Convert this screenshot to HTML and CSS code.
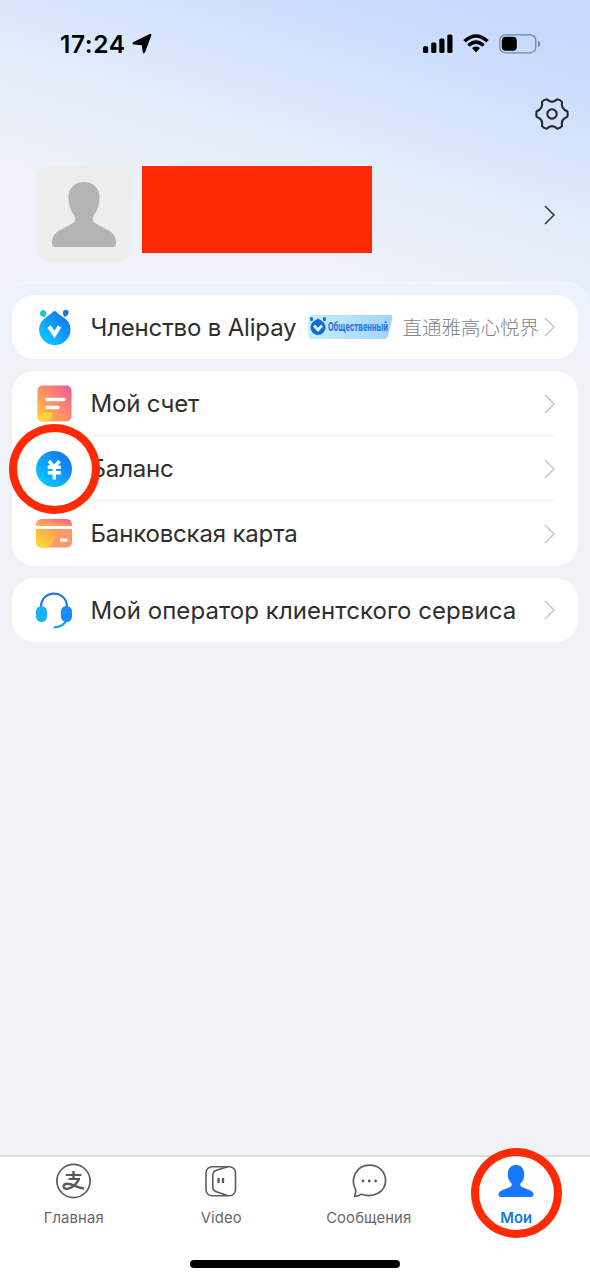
FILE: index.html
```html
<!DOCTYPE html>
<html lang="ru">
<head>
<meta charset="utf-8">
<title>Alipay</title>
<link rel="stylesheet" href="styles.css">
</head>
<body>
<div class="screen">
  <header class="status">
    <div class="clock"><span class="time">17:24</span>
      <svg class="loc" width="20" height="20" viewBox="0 0 20 20"><path d="M18.600 1.400 12.500 18Q11.800 19.500 11.400 18L10.300 10.600 2 9.900Q.300 9.500 1.800 8.600L17.600 .800Q19.200 .200 18.600 1.400Z" stroke="#000" stroke-width="1.300" stroke-linejoin="round"/></svg>
    </div>
    <div class="signals">
      <svg width="30" height="20" viewBox="0 0 30 20"><rect x="0" y="12.3" width="5.2" height="6.7" rx="1.5"/><rect x="8.2" y="8.4" width="5.2" height="10.6" rx="1.5"/><rect x="16.3" y="4.6" width="5.2" height="14.4" rx="1.5"/><rect x="24.3" y=".5" width="5.2" height="18.5" rx="1.5"/></svg>
      <svg width="26" height="20" viewBox="0 0 26 20" fill="none" stroke="#000" stroke-width="3.5"><path d="M1.5 7.2Q13-3.2 24.5 7.2"/><path d="M5.4 11.5Q13 4.8 20.6 11.5"/><path d="M9 14Q13 11.2 17 14L13 18.5Z" fill="#000" stroke="none"/></svg>
      <svg width="42" height="20" viewBox="0 0 42 20"><rect x=".8" y=".8" width="36" height="18" rx="5.6" fill="none" stroke="#77859a" stroke-width="1.3"/><rect x="2.8" y="2.8" width="15" height="14" rx="3.8"/><path d="M39 6.7q2.4 1 2.400 3.200T39 13Z" fill="#77859a"/></svg>
    </div>
  </header>
  <div class="tools">
    <svg width="36" height="36" viewBox="-18 -18 36 36" fill="none" stroke="#262a31" stroke-width="2.1" stroke-linejoin="round"><path d="M15.4 2.7Q8.7 5 10 12Q8.8 14 5.3 14.7Q0 9.7-5.3 14.7Q-8.8 14-10 12Q-8.7 5-15.4 2.7Q-16-0-15.4-2.7Q-8.7-5-10-12Q-8.8-14-5.3-14.7Q0-9.7 5.3-14.7Q8.8-14 10-12Q8.7-5 15.4-2.7Q16 0 15.4 2.7Z"/><circle r="4.7"/></svg>
  </div>
  <section class="profile">
    <div class="avatar">
      <svg width="64" height="65" viewBox="0 0 64 65" fill="#b4b4b4"><path d="M32 0C22 0 16.5 7 16.5 15C16.5 22 18 28 22.5 33.5Q25 39 19.5 42L7 48.5Q0 53 0 60V62Q0 65 3 65H61Q64 65 64 62V60Q64 53 57 48.500L44.500 42Q39 39 41.500 33.500C46 28 47.500 22 47.500 15C47.500 7 42 0 32 0Z"/></svg>
    </div>
    <div class="redacted"></div>
    <svg class="arrow dark" width="12" height="20" viewBox="0 0 12 20"><path d="m1 1 9 9-9 9"/></svg>
  </section>
  <main class="sheet">
    <div class="card">
      <div class="row">
        <svg class="icon" width="36" height="38" viewBox="0 0 36 38">
          <defs><linearGradient id="blue" x1="1" y1="0" x2="0" y2="1"><stop offset=".2" stop-color="#127df8"/><stop offset="1" stop-color="#08d6ff"/></linearGradient></defs>
          <path d="M8.800 9Q3.500 9 4 4.500Q5.500 .800 8.800 2.500Q12 5 8.800 9Z" fill="#1dc3d8"/><path d="M28.500 9Q33.500 7 32.500 3Q29.500 .300 27.200 3Q26 6 28.500 9Z" fill="#147bdc"/>
          <path d="M18.500 3Q20 3 23 6.500C28 9.500 34.500 13 34.500 21.500A15.700 15.700 0 0 1 3.100 21.500C3.100 13 10 9.500 14.500 6Q17.500 3 18.500 3Z" fill="url(#blue)"/><path d="m13 18.500 5.500 8 5-8" fill="none" stroke="#fff" stroke-width="4"/>
        </svg>
        <span class="label">Членство в Alipay</span>
        <svg class="badge" width="86" height="26" viewBox="0 0 86 26">
          <defs><linearGradient id="pale"><stop stop-color="#c4f0fd"/><stop offset="1" stop-color="#a2d2fa"/></linearGradient></defs>
          <path d="M6 1H83Q86 1 85.300 4L81 22Q80 25 77 25H6Q1 25 1 20V6Q1 1 6 1Z" fill="url(#pale)"/>
          <path d="M4.500 5.500V4.500M17.500 5.500V4.500" stroke="#1769db" stroke-width="3" stroke-linecap="round"/><path d="M11 4.500Q18.500 8 18.500 13.500A7.500 7.500 0 0 1 3.500 13.500Q3.500 8 11 4.500Z" fill="#1769db"/><path d="m7 11.500 4 4.500 4-4.500" fill="none" stroke="#dff6ff" stroke-width="2.800"/>
          <text class="badge-text" transform="translate(21 17.300) scale(.68 1)">Общественный</text>
        </svg>
        <span class="note">直通雅高心悦界</span>
        <svg class="arrow" width="12" height="20" viewBox="0 0 12 20"><path d="m1 1 9 9-9 9"/></svg>
      </div>
    </div>
    <div class="card">
      <div class="row">
        <svg class="icon" width="36" height="37" viewBox="0 0 36 37">
          <defs><linearGradient id="warm" x1="1" y1="0" x2="0" y2="1"><stop offset=".05" stop-color="#f45d8f"/><stop offset=".6" stop-color="#ff9861"/><stop offset="1" stop-color="#ffb34e"/></linearGradient><linearGradient id="gold" x1="1" y1="0" x2="0" y2="1"><stop stop-color="#ff9458"/><stop offset="1" stop-color="#ffe02b"/></linearGradient></defs>
          <rect x="1.500" y=".500" width="34" height="36" rx="5" fill="url(#warm)"/><path d="M1.500 15C10 17 16 24 12 36.500H6.500Q1.500 36.500 1.500 31Z" fill="url(#gold)" opacity=".6"/><path d="M1.500 31Q8 25 17 27.500Q16 33 12 36.500H6.500Q1.500 36.500 1.500 31Z" fill="#ffd93b" opacity=".8"/><path d="M11 14.500H28M11 22.500H22" stroke="#fff" stroke-width="3.300" stroke-linecap="round"/>
        </svg>
        <span class="label">Мой счет</span>
        <svg class="arrow" width="12" height="20" viewBox="0 0 12 20"><path d="m1 1 9 9-9 9"/></svg>
      </div>
      <div class="row">
        <div class="icon marked">
          <svg width="36" height="36" viewBox="0 0 36 36"><circle cx="18" cy="18" r="18" fill="url(#blue)"/><path d="m12.800 10 5.400 6 5.400-6M11.800 16.200H24.800M11.800 21.700H24.800M18.300 15V28.500" fill="none" stroke="#fff" stroke-width="3.400"/></svg>
          <i class="ring"></i>
        </div>
        <span class="label">Баланс</span>
        <svg class="arrow" width="12" height="20" viewBox="0 0 12 20"><path d="m1 1 9 9-9 9"/></svg>
      </div>
      <div class="row">
        <svg class="icon" width="36" height="29" viewBox="0 0 36 29"><path d="M0 7V6Q0 0 6 0H30Q36 0 36 6V7Z" fill="url(#warm)"/><path d="M0 10H36V23Q36 28.500 30 28.500H6Q0 28.500 0 23Z" fill="#ff986c"/><path d="M0 10H26Q21 14 18.500 20T12 28.500H6Q0 28.500 0 23Z" fill="url(#gold)"/><rect x="24" y="19.500" width="7.500" height="3.300" rx="1" fill="#fff"/></svg>
        <span class="label">Банковская карта</span>
        <svg class="arrow" width="12" height="20" viewBox="0 0 12 20"><path d="m1 1 9 9-9 9"/></svg>
      </div>
    </div>
    <div class="card">
      <div class="row">
        <svg class="icon" width="36" height="37" viewBox="0 0 36 37"><path d="M5 15C5-2.800 31-2.800 31 15" fill="none" stroke="#2479d5" stroke-width="2.200"/><path d="M31 27Q28 35 18.500 35.300" fill="none" stroke="#23a0e8" stroke-width="2.200" stroke-linecap="round"/><rect y="14" width="11" height="16" rx="5.500" fill="#18b2f5"/><rect x="25" y="14" width="11" height="16" rx="5.500" fill="#168bfa"/></svg>
        <span class="label service">Мой оператор клиентского сервиса</span>
        <svg class="arrow" width="12" height="20" viewBox="0 0 12 20"><path d="m1 1 9 9-9 9"/></svg>
      </div>
    </div>
  </main>
  <nav class="tabs">
    <div class="tab">
      <svg width="36" height="36" viewBox="0 0 36 36" fill="none" stroke="#5b5c5f" stroke-width="1.700"><circle cx="17.500" cy="18" r="16.600"/><path d="M9.800 12H25.500M12.500 16H24" stroke-width="1.900"/><path d="M17.500 8V16.200M23 16C20.500 21.500 15 26 10.500 26C6.500 26 6.500 21 11 20.700C16.500 20.300 20 25 28 25.500" stroke-width="2.400"/></svg>
      <span>Главная</span>
    </div>
    <div class="tab">
      <svg width="36" height="36" viewBox="0 0 36 36" fill="none" stroke="#5b5c5f" stroke-width="1.600"><rect x="3" y="3.700" width="29.500" height="29" rx="6"/><path d="M24.500 3.700 13.500 7.200Q9.800 8.400 9.800 12V24.500Q9.800 27.500 13.500 28.700L24.500 32.500"/><path d="M15.500 16V19M20 16V19" stroke-width="2.400" stroke-linecap="round"/></svg>
      <span>Video</span>
    </div>
    <div class="tab">
      <svg width="36" height="36" viewBox="0 0 36 36" fill="none" stroke="#5b5c5f" stroke-width="1.700" stroke-linejoin="round"><path d="M3.500 33.500Q5.300 29.500 4.500 26.300C-1 16 5 2.200 18.500 2.200C28 2.200 34.600 9 34.600 17.400C34.600 29 22 35.500 10.500 31.200Q7.500 33.500 3.500 33.500Z"/><path d="M12 18h.01M18.300 18h.01M24.600 18h.01" stroke-width="2.800" stroke-linecap="round"/></svg>
      <span>Сообщения</span>
    </div>
    <div class="tab active">
      <svg width="36" height="36" viewBox="0 0 36 36" fill="#1677ff"><path d="M18 2C12 2 9.800 7 9.800 11C9.800 16 11 18 13.600 20.500Q14.500 23.500 11.500 24.300L4 27.300Q.5 29 .5 32Q.5 34 3 34H33Q35.500 34 35.500 32Q35.500 29 32 27.300L24.500 24.300Q21.500 23.500 22.400 20.500C25 18 26.200 16 26.200 11C26.200 7 24 2 18 2Z"/></svg>
      <span>Мои</span>
      <i class="ring"></i>
    </div>
    <div class="home-bar"></div>
  </nav>
</div>
</body>
</html>
```
FILE: styles.css
```css
* { box-sizing: border-box; }
body { margin: 0; font-family: Inter, "Noto Sans CJK SC", sans-serif; color: #2e2e2e; }
svg { display: block; flex: none; }
.screen {
  width: 590px; height: 1280px; display: flex; flex-direction: column; overflow: hidden;
  background: linear-gradient(197deg, #c5d9fc 40px, #d4e3fd 140px, #e5edf9 235px, #eff2f8 330px);
}
.status { height: 88px; padding: 0 49px 0 60px; display: flex; align-items: center; justify-content: space-between; color: #000; }
.clock { display: flex; align-items: center; gap: 6px; }
.time { font-size: 24.5px; font-weight: 600; letter-spacing: .6px; }
.signals { display: flex; gap: 10px; }
.tools { height: 78px; padding: 8px 20px 0 0; display: flex; justify-content: flex-end; }
.profile { height: 116px; padding: 0 34px 0 36px; display: flex; align-items: flex-start; }
.avatar { width: 96px; height: 96px; border-radius: 16px; background: #eee; display: flex; justify-content: center; padding-top: 16px; }
.redacted { width: 230px; height: 87px; margin-left: 10px; background: #ff2a04; }
.arrow { fill: none; stroke: #c7c7c9; stroke-width: 1.5; margin-left: auto; }
.arrow.dark { stroke: #30343a; margin-top: 39px; }
.sheet {
  flex: 1; display: flex; flex-direction: column; gap: 12px; padding: 12px 12px 0;
  border-top: 1px solid #f5f9ff; border-radius: 26px 26px 0 0;
  background: linear-gradient(#ecf3fd, #eff2f7 90px);
}
.card { background: #fff; border-radius: 22px; }
.row { height: 65px; padding: 0 22px 0 24px; display: flex; align-items: center; position: relative; }
.card > .row:only-child { height: 64px; }
.row + .row::before { content: ""; position: absolute; top: -1px; left: 79px; right: 24px; height: 1px; background: #eeeeef; }
.icon { margin-right: 18.5px; }
.label { font-size: 24px; letter-spacing: -.17px; white-space: nowrap; }
.service { letter-spacing: .06px; }
.badge { margin-left: 11px; }
.badge-text { font: 700 12px Roboto, sans-serif; fill: #2674d7; }
.note { margin: -2px 0 0 9px; font-size: 19.5px; font-weight: 300; color: #848487; font-family: "Noto Sans CJK SC", sans-serif; white-space: nowrap; }
.marked { position: relative; }
.ring { position: absolute; width: 91px; height: 90px; border: 8px solid #ff2a04; border-radius: 50%; z-index: 2; }
.marked .ring { left: -27px; top: -27px; }
.tabs { height: 125px; border-top: 2px solid #dcdce0; background: #fff; display: grid; grid-template-columns: repeat(4, 1fr); grid-template-rows: 103px 8px; }
.tab { position: relative; display: flex; flex-direction: column; align-items: center; gap: 8px; padding-top: 6px; font-size: 14.8px; letter-spacing: .15px; line-height: 22px; color: #66676a; }
.active { color: #1677df; font-weight: 600; }
.active .ring { left: 28px; top: -9px; }
.home-bar { grid-column: 1 / -1; justify-self: center; width: 210px; height: 8px; border-radius: 4px; background: #000; }
```
